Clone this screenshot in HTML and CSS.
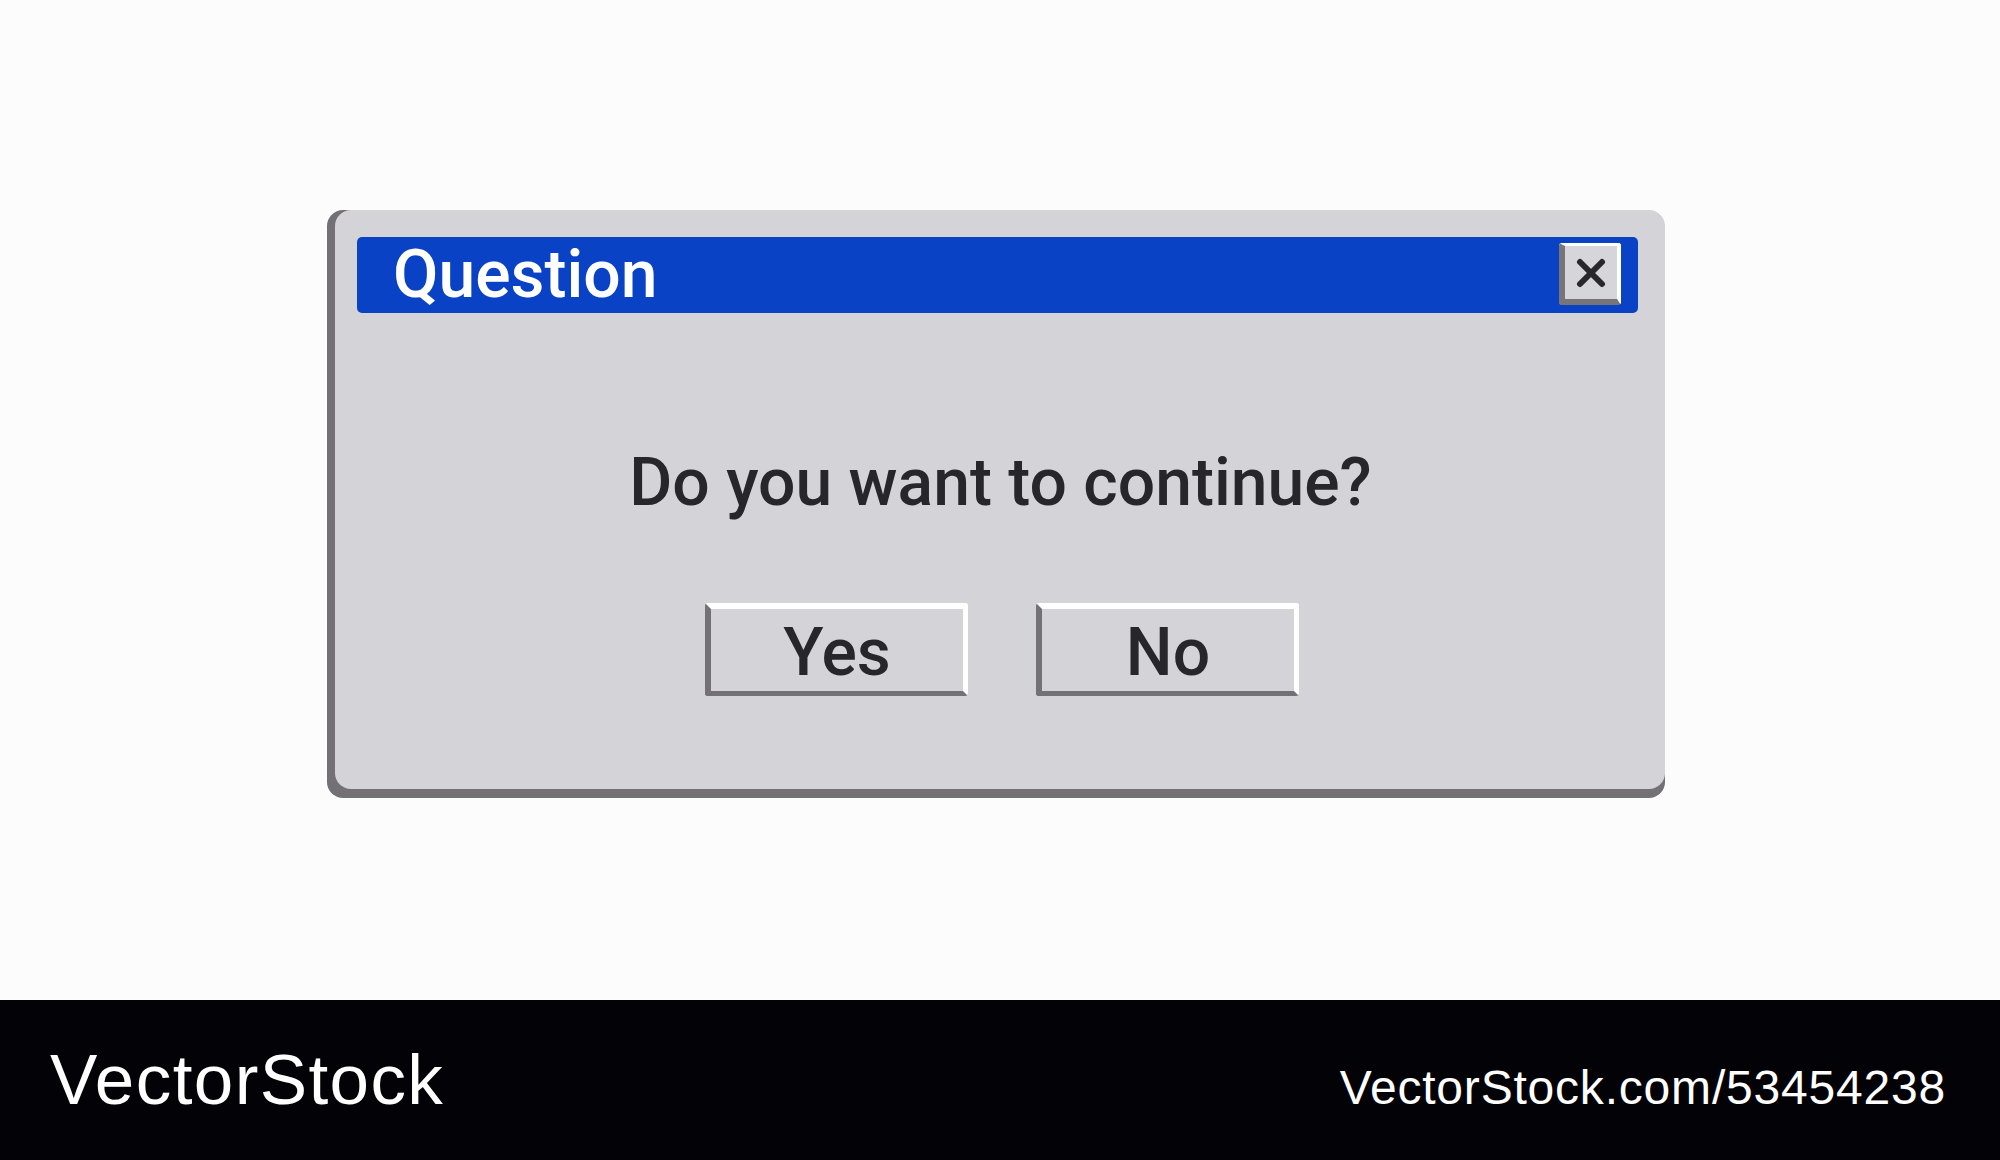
FILE: index.html
```html
<!DOCTYPE html>
<html lang="en">
<head>
    <meta charset="UTF-8">
    <meta name="viewport" content="width=device-width, initial-scale=1.0">
    <title>Question</title>
    <link rel="stylesheet" href="styles.css">
</head>
<body>
    <main class="stage">
        <div class="dialog">
            <div class="title-bar">
                <span class="title">Question</span>
                <button class="close-btn" aria-label="Close">
                    <svg width="30" height="30" viewBox="0 0 30 30">
                        <path d="M4 4 L26 26 M26 4 L4 26" stroke="#28272c" stroke-width="6" stroke-linecap="round" fill="none"/>
                    </svg>
                </button>
            </div>
            <p class="message">Do you want to continue?</p>
            <div class="actions">
                <button class="btn">Yes</button>
                <button class="btn">No</button>
            </div>
        </div>
    </main>

    <footer class="footer">
        <span class="brand">VectorStock</span>
        <span class="ref">VectorStock.com/53454238</span>
    </footer>
</body>
</html>
```

FILE: styles.css
```css
body {
    margin: 0;
    background: #fdfcfd;
    font-family: Roboto, "Liberation Sans", sans-serif;
}
.stage {
    height: 1000px;
    padding-top: 210px;
    box-sizing: border-box;
}
.dialog {
    width: 1330px;
    margin: 0 auto;
    background: #d4d3d8;
    border-radius: 16px;
    padding: 27px 27px 93px 22px;
    box-sizing: border-box;
    box-shadow: -8px 0 0 #747176, 0 9px 0 #747176, -8px 9px 0 #747176;
}
.title-bar {
    height: 76px;
    background: #0a42c5;
    border-radius: 5px;
    display: flex;
    align-items: center;
    padding-left: 36px;
}
.title {
    color: #fff;
    font-size: 66px;
    font-weight: 500;
    line-height: 1;
}
.close-btn {
    margin: 0 17px 2px auto;
    width: 62px;
    height: 62px;
    padding: 0;
    box-sizing: border-box;
    background: #d6d5da;
    border-style: solid;
    border-width: 3px 4px 6px 6px;
    border-color: #fff #fff #77757a #77757a;
    border-radius: 3px;
    display: flex;
    align-items: center;
    justify-content: center;
}
.message {
    margin: 137px 0 0;
    padding-left: 6px;
    text-align: center;
    font-size: 66px;
    font-weight: 500;
    line-height: 1;
    color: #27262b;
}
.actions {
    display: flex;
    justify-content: center;
    gap: 68px;
    margin-top: 87px;
    padding-left: 9px;
}
.btn {
    width: 263px;
    height: 93px;
    box-sizing: border-box;
    background: #d4d3d8;
    border-style: solid;
    border-width: 6px 5px 5px 6px;
    border-color: #fff #fff #747176 #747176;
    border-radius: 3px;
    padding: 6px 0 0;
    font-family: Roboto, "Liberation Sans", sans-serif;
    font-size: 66px;
    font-weight: 500;
    line-height: 76px;
    color: #27262b;
}
.footer {
    height: 160px;
    box-sizing: border-box;
    background: #030206;
    color: #fff;
    font-family: "Liberation Sans", Arial, sans-serif;
    display: flex;
    justify-content: space-between;
    align-items: baseline;
    padding: 44px 54px 0 50px;
}
.brand {
    font-size: 71px;
    line-height: 1;
    letter-spacing: 1.4px;
}
.ref {
    font-size: 48px;
    line-height: 1;
    letter-spacing: 0.8px;
}
```
